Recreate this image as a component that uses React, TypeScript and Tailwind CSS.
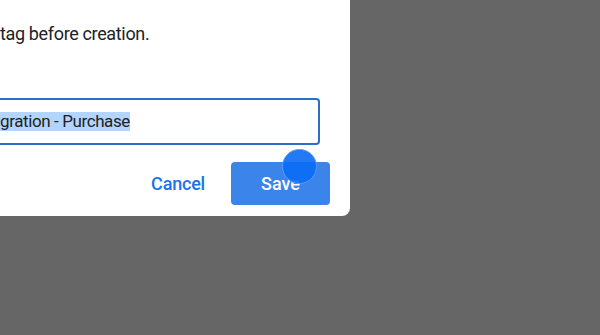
import React from "react";

export default function App() {
  return (
    <div className="w-[600px] h-[335px] bg-[#666666] overflow-hidden font-['Roboto',sans-serif]">
      <div className="w-[350px] h-[216px] bg-white rounded-br-[8px] flex flex-col">
        <p className="pt-[22px] text-[18px] leading-[24px] tracking-[-0.35px] text-[#202124] whitespace-nowrap">
          tag before creation.
        </p>
        <div className="mt-[52px] mr-[30px] h-[47px] border-2 border-l-0 border-[#2b6fc6] rounded-r-[4px] flex items-center">
          <span className="bg-[#b4d5fb] text-[17px] leading-[19px] tracking-[-0.4px] text-[#202124] whitespace-nowrap">
            gration - Purchase
          </span>
        </div>
        <div className="mt-[17px] flex justify-end items-center gap-[26px] pr-[20px]">
          <button className="text-[#1a73e8] text-[18px] font-medium leading-[20px] tracking-[-0.2px]">Cancel</button>
          <button className="relative w-[99px] h-[43px] bg-[#3a84ea] rounded-[4px] text-white text-[18px] font-medium leading-[20px]">
            Save
            <span className="absolute left-[51px] top-[-13px] w-[35px] h-[35px] rounded-full bg-[#0a6cf5]/90 border border-[#5a9af5]" />
          </button>
        </div>
      </div>
    </div>
  );
}
